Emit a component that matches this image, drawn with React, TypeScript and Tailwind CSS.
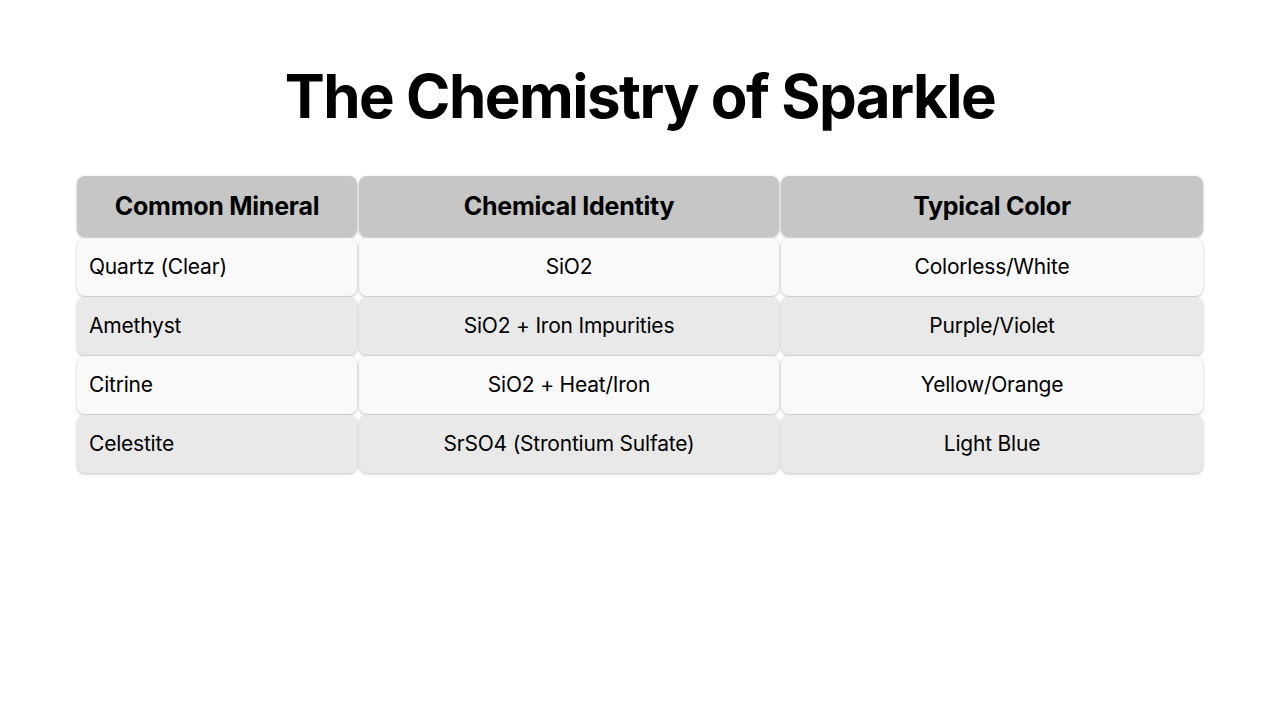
const rows = [
  ["Quartz (Clear)", "SiO2", "Colorless/White"],
  ["Amethyst", "SiO2 + Iron Impurities", "Purple/Violet"],
  ["Citrine", "SiO2 + Heat/Iron", "Yellow/Orange"],
  ["Celestite", "SrSO4 (Strontium Sulfate)", "Light Blue"],
];

const headers = ["Common Mineral", "Chemical Identity", "Typical Color"];

export default function App() {
  return (
    <div className="w-[1280px] h-[720px] bg-white font-['Inter','Noto_Sans',sans-serif] text-black">
      <h1 className="pt-[60px] text-center text-[60px] leading-[72px] font-bold tracking-[-0.025em]">
        The Chemistry of Sparkle
      </h1>
      <div className="mt-[44px] ml-[77px] grid grid-cols-[280px_420px_422px] gap-x-[2px] gap-y-[1px]">
        {headers.map((h) => (
          <div
            key={h}
            className="h-[61px] flex items-center justify-center rounded-[8px] bg-[#c6c6c6] shadow-[0_1px_3px_rgba(0,0,0,0.25)] text-[25px] font-bold tracking-[-0.01em]"
          >
            {h}
          </div>
        ))}
        {rows.map((r, i) =>
          r.map((c, j) => (
            <div
              key={i + "-" + j}
              className={
                "h-[58px] flex items-center rounded-[8px] shadow-[0_1px_3px_rgba(0,0,0,0.25)] text-[21px] tracking-[-0.01em] " +
                (i % 2 === 0 ? "bg-[#f9f9f9] " : "bg-[#e9e9e9] ") +
                (j === 0 ? "justify-start pl-[12px]" : "justify-center")
              }
            >
              {c}
            </div>
          ))
        )}
      </div>
    </div>
  );
}
